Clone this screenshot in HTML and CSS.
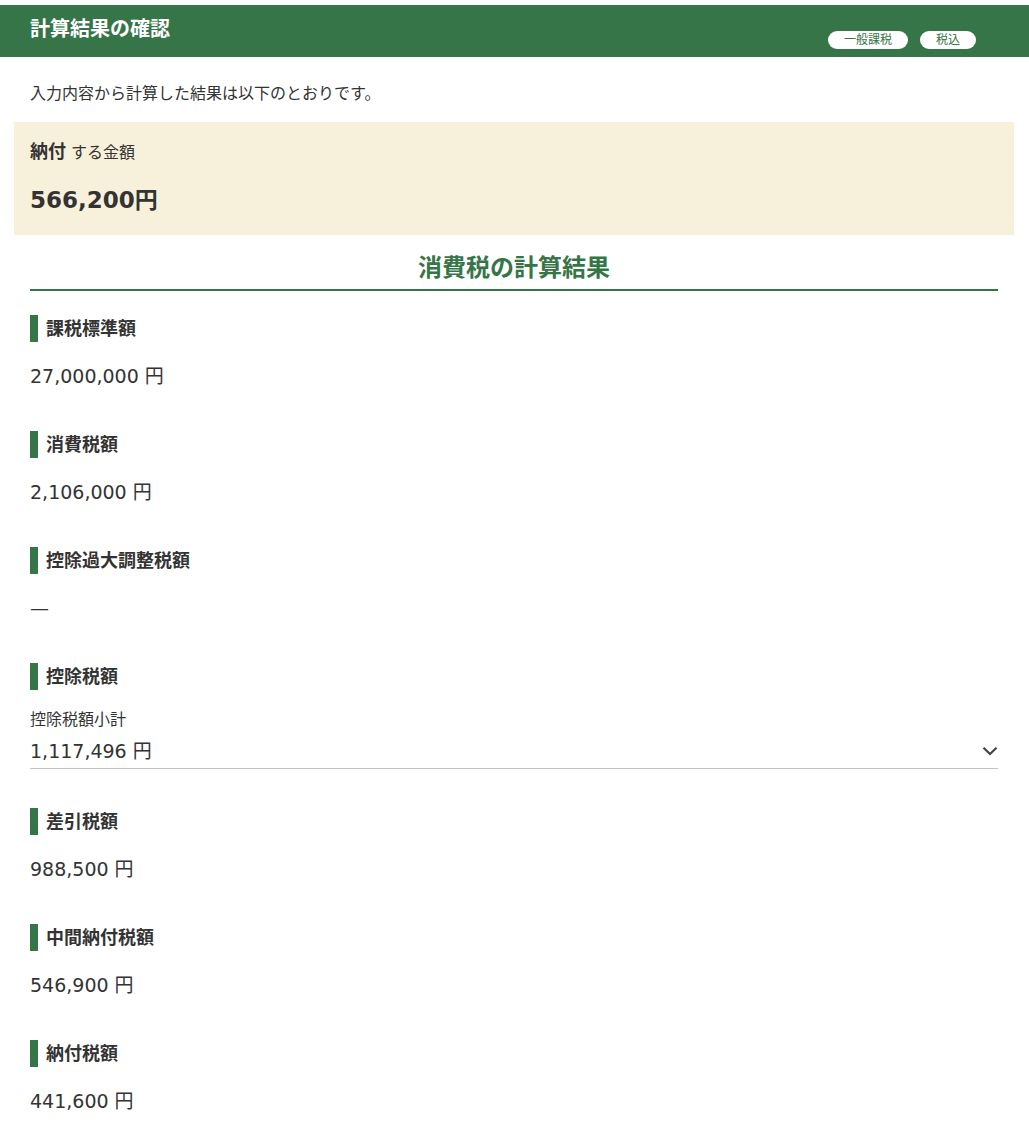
FILE: index.html
```html
<!DOCTYPE html>
<html lang="ja">

<head>
  <meta charset="UTF-8" />
  <title>計算結果の確認</title>
  <link rel="stylesheet" href="styles.css">
</head>

<body>

  <div class="page">
    <header class="result-header">
      <h1>計算結果の確認</h1>
      <div class="badges">
        <span class="badge">一般課税</span>
        <span class="badge">税込</span>
      </div>
    </header>

    <p class="intro">入力内容から計算した結果は以下のとおりです。</p>

    <div class="payment-box">
      <p class="payment-label"><strong>納付</strong> する金額</p>
      <p class="payment-amount">566,200円</p>
    </div>

    <h2 class="section-title">消費税の計算結果</h2>

    <div class="result-list">
      <div class="result-item">
        <h3>課税標準額</h3>
        <p class="result-value">27,000,000 円</p>
      </div>

      <div class="result-item">
        <h3>消費税額</h3>
        <p class="result-value">2,106,000 円</p>
      </div>

      <div class="result-item">
        <h3>控除過大調整税額</h3>
        <p class="result-value">—</p>
      </div>

      <div class="result-item">
        <h3>控除税額</h3>
        <div class="subtotal">
          <p class="subtotal-label">控除税額小計</p>
          <div class="subtotal-row">
            <p class="result-value">1,117,496 円</p>
            <svg class="chevron" width="16" height="10" viewBox="0 0 16 10">
              <path d="M1.5 1.8 L8 8 L14.5 1.8" fill="none" stroke="#444" stroke-width="2.2" />
            </svg>
          </div>
        </div>
      </div>

      <div class="result-item after-subtotal">
        <h3>差引税額</h3>
        <p class="result-value">988,500 円</p>
      </div>

      <div class="result-item">
        <h3>中間納付税額</h3>
        <p class="result-value">546,900 円</p>
      </div>

      <div class="result-item">
        <h3>納付税額</h3>
        <p class="result-value">441,600 円</p>
      </div>
    </div>
  </div>

</body>

</html>
```

FILE: styles.css
```css
body {
  margin: 0;
  background: #fff;
  color: #333;
  font-family: "DejaVu Sans", "Noto Sans CJK JP", sans-serif;
}

p,
h1,
h2,
h3 {
  margin: 0;
}

.page {
  padding-top: 5px;
}

/* green title bar */
.result-header {
  display: flex;
  justify-content: space-between;
  align-items: center;
  height: 52px;
  padding: 0 53px 0 30px;
  background: #367548;
}

.result-header h1 {
  color: #fff;
  font-size: 20px;
  font-weight: bold;
  line-height: 24px;
  margin-top: -4px;
}

.badges {
  display: flex;
  gap: 12px;
  align-self: flex-end;
  margin-bottom: 8px;
}

.badge {
  background: #fff;
  color: #367548;
  font-size: 12px;
  line-height: 18px;
  padding: 0 16px;
  border-radius: 9px;
}

.intro {
  font-size: 16px;
  line-height: 24px;
  padding: 25px 30px 0;
}

/* amount to pay */
.payment-box {
  margin: 16px 15px 0 14px;
  padding: 17px 16px 18px;
  background: #f7f0da;
}

.payment-label {
  font-size: 16px;
  line-height: 26px;
}

.payment-label strong {
  font-size: 18px;
}

.payment-amount {
  margin-top: 17px;
  font-size: 23px;
  font-weight: bold;
  line-height: 34px;
}

.section-title {
  margin: 18px 31px 0 30px;
  padding-bottom: 6px;
  border-bottom: 2px solid #367548;
  color: #367548;
  font-size: 24px;
  font-weight: bold;
  line-height: 30px;
  text-align: center;
}

.result-list {
  padding: 0 31px 0 30px;
}

.result-item {
  padding: 24px 0 17px;
}

.result-item.after-subtotal {
  padding-top: 22px;
}

.result-item h3 {
  border-left: 8px solid #367548;
  padding-left: 8px;
  font-size: 18px;
  font-weight: bold;
  line-height: 27px;
}

.result-value {
  margin-top: 20px;
  font-size: 19px;
  line-height: 28px;
}

.subtotal {
  margin-top: 20px;
  padding-bottom: 3px;
  border-bottom: 1px solid #c9c2bb;
}

.subtotal-label {
  font-size: 16px;
  line-height: 20px;
}

.subtotal-row {
  display: flex;
  justify-content: space-between;
  align-items: center;
  margin-top: 7px;
}

.subtotal-row .result-value {
  margin-top: 0;
}
```
